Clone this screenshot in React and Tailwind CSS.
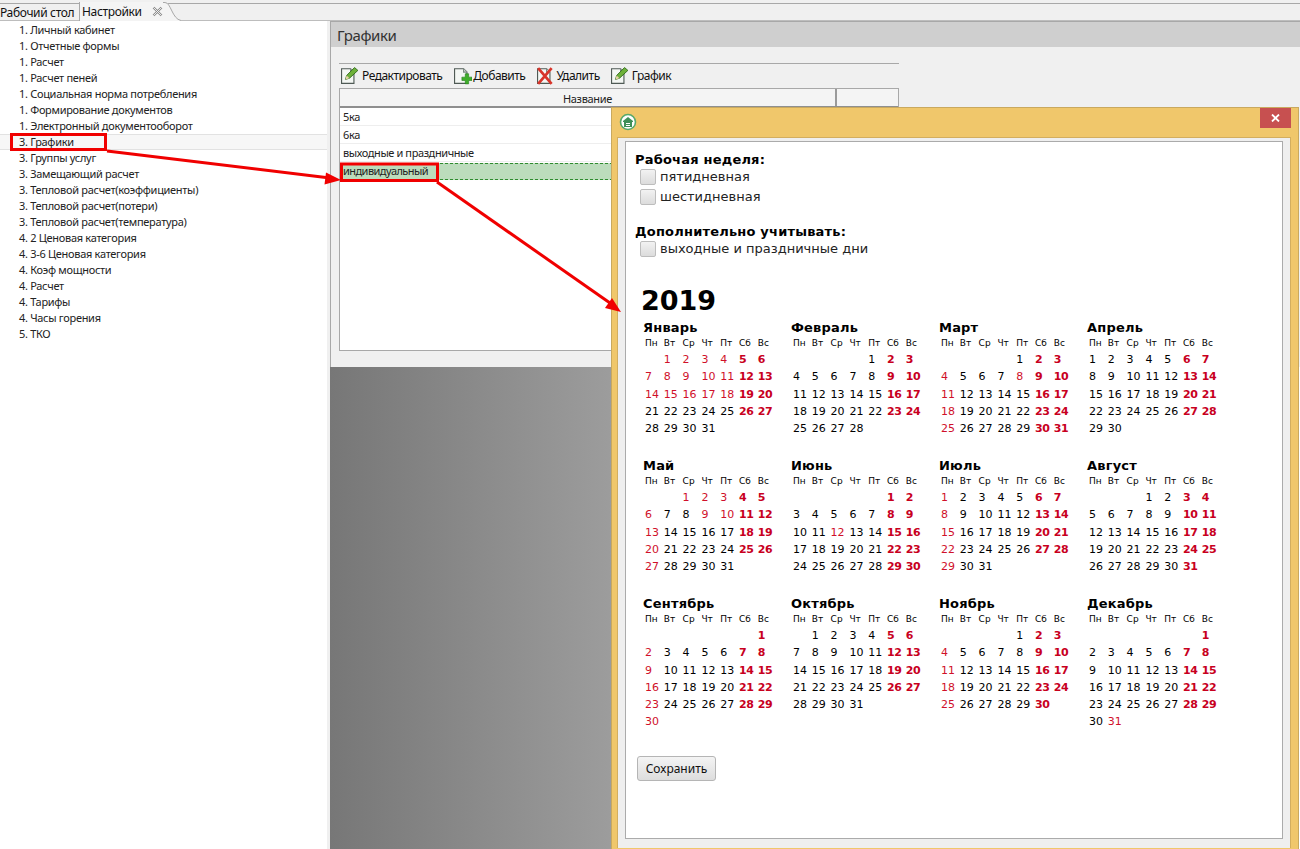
import React from 'react';

const menu = [
  '1. Личный кабинет','1. Отчетные формы','1. Расчет','1. Расчет пеней','1. Социальная норма потребления','1. Формирование документов','1. Электронный документооборот','3. Графики','3. Группы услуг','3. Замещающий расчет','3. Тепловой расчет(коэффициенты)','3. Тепловой расчет(потери)','3. Тепловой расчет(температура)','4. 2 Ценовая категория','4. 3-6 Ценовая категория','4. Коэф мощности','4. Расчет','4. Тарифы','4. Часы горения','5. ТКО',
];
const monthNames = ['Январь','Февраль','Март','Апрель','Май','Июнь','Июль','Август','Сентябрь','Октябрь','Ноябрь','Декабрь'];
const weekdays = ['Пн','Вт','Ср','Чт','Пт','Сб','Вс'];
const holidays = {
  0:[1,2,3,4,7,8,9,10,11,14,15,16,17,18],
  2:[4,8,11,18,25],
  4:[1,2,3,6,9,10,13,20,27],
  5:[12],
  6:[1,8,15,22,29],
  8:[2,9,16,23,30],
  10:[4,11,18,25],
  11:[31],
};

function Month({ index }) {
  const first = (new Date(2019, index, 1).getDay() + 6) % 7;
  const count = new Date(2019, index + 1, 0).getDate();
  const cells = [];
  for (let i = 0; i < first; i++) cells.push(<span key={'e' + i} />);
  for (let d = 1; d <= count; d++) {
    const wd = (first + d - 1) % 7;
    const weekend = wd >= 5;
    const hol = (holidays[index] || []).includes(d);
    cells.push(
      <span key={d} className={weekend ? 'font-bold text-[#c8001e] text-[11px] tracking-[-0.5px]' : hol ? 'text-[#d0102a]' : 'text-black'}>{d}</span>
    );
  }
  return (
    <div className="h-[138px]">
      <div className="font-bold text-[13px] leading-[15px] pl-px tracking-[0.2px] text-black">{monthNames[index]}</div>
      <div className="grid grid-cols-[repeat(7,18.8px)] pl-[3px] text-[9px] leading-[12px] mt-[2px] text-black">
        {weekdays.map((w) => <span key={w}>{w}</span>)}
      </div>
      <div className="grid grid-cols-[repeat(7,18.8px)] auto-rows-[17.25px] pl-[3px] mt-[2px] text-[11px] leading-[17px]">
        {cells}
      </div>
    </div>
  );
}

function DocPage({ children }) {
  return (
    <svg width="18" height="18" viewBox="2 2 16 16" className="shrink-0">
      <path d="M2.500 3.500h8l3 3v10h-11z" fill="#f4f7f4" stroke="#4f5a55" />
      <path d="M10.500 3.500v3h3" fill="#cfd8d0" stroke="#7c8a82" />
      {children}
    </svg>
  );
}
const Pencil = () => (
  <DocPage>
    <path d="M6 13l1-3.500L14 2.500l3 2.500-7.500 7z" fill="#6fb13a" stroke="#2f6b1c" strokeWidth="0.8" />
    <path d="M6 13l1-3.500 2.500 2.500z" fill="#e9d6a8" />
  </DocPage>
);
const Plus = () => (
  <DocPage>
    <path d="M9 11h3V8h3v3h3v3h-3v3h-3v-3H9z" fill="#3fae2a" stroke="#1f7a16" strokeWidth="0.5" />
  </DocPage>
);
const Del = () => (
  <DocPage>
    <path d="M3 3l12 14M15 3L3 17" stroke="#d8342a" strokeWidth="2.4" />
  </DocPage>
);

function Check({ label }) {
  return (
    <div className="flex items-center gap-1 h-[20px] pl-[5px]">
      <span className="w-[16px] h-[16px] rounded-[2px] border border-[#bdbdbd] bg-gradient-to-b from-[#f2f2f2] to-[#dcdcdc] shrink-0" />
      <span className="text-[13px] text-[#222]">{label}</span>
    </div>
  );
}

export default function App() {
  return (
    <div className="relative w-[1300px] h-[849px] overflow-hidden bg-white font-['Noto_Sans',sans-serif] text-[11px] tracking-[-0.3px] text-[#222]">
      {/* tabs */}
      <div className="h-[21px] bg-[#f0f0f0] border-t-2 border-t-[#f0f0f0] relative flex items-end">
        <div className="absolute left-0 right-0 top-[1px] h-px bg-[#a8a8a8]" />
        <div className="absolute left-0 right-0 bottom-0 h-px bg-[#bdbdbd]" />
        <span className="relative pl-0 w-[78px] h-[18px] text-[12px] leading-[20px] tracking-[-0.35px] text-[#111] whitespace-nowrap">Рабочий стол</span>
        <div className="relative flex items-center w-[73px] h-[19px] ml-[1px] bg-[#f4f4f4] border-l border-[#a8a8a8] pl-[2px] pt-px text-[12px] tracking-[-0.35px] text-[#111] whitespace-nowrap">
          Настройки
        </div>
        <div className="relative h-[19px] w-[11px] bg-[#f4f4f4] flex items-center">
          <svg width="11" height="11" viewBox="0 0 11 11">
            <path d="M1.500 1.500l8 8M9.500 1.500l-8 8" stroke="#8a8a8a" strokeWidth="2.4" />
            <path d="M1.500 1.500l8 8M9.500 1.500l-8 8" stroke="#f4f4f4" strokeWidth="0.9" />
          </svg>
        </div>
        <svg width="18" height="19" viewBox="0 0 18 19" className="relative shrink-0">
          <path d="M0 0h2C8 0 9 17 18 18.500V19H0z" fill="#f4f4f4" />
          <path d="M0 .5h2C8 .5 9 17 18 18.500" fill="none" stroke="#a8a8a8" />
        </svg>
      </div>

      <div className="flex h-[828px]">
        {/* sidebar */}
        <div className="w-[327px] shrink-0 pt-px">
          {menu.map((m) => (
            <div
              key={m}
              className={
                'h-[16px] pl-[19px] whitespace-pre ' +
                (m === '3. Графики' ? 'bg-[#f7f7f7] border-y border-[#e2e2e2] leading-[13px]' : 'leading-[16px]')
              }
            >
              {m}
            </div>
          ))}
        </div>
        <div className="w-[3px] shrink-0 bg-[#f0f0f0]" />
        {/* right */}
        <div className="flex-1 flex flex-col">
          <div className="h-[346px] bg-[#f0f0f0] border-l border-t border-[#a8a8a8] flex flex-col shrink-0">
            <div className="h-[25px] bg-[#cfcfcf] pl-[6px] text-[15px] leading-[27px] tracking-[-0.4px] text-[#333] shrink-0">Графики</div>
            <div className="pl-[8px] w-[568px]">
              <div className="mt-[16px] h-px bg-[#a8a8a8]" />
              <div className="h-[24px] flex items-center pl-[2px] text-[12px] tracking-[-0.5px] text-[#111]">
                <span className="flex items-center gap-[3px]"><Pencil />Редактировать</span>
                <span className="flex items-center gap-[1px] ml-[12px]"><Plus />Добавить</span>
                <span className="flex items-center gap-[1px] ml-[12px]"><Del />Удалить</span>
                <span className="flex items-center gap-[3px] ml-[11px]"><Pencil />График</span>
              </div>
              <div className="h-[263px] border border-[#a8a8a8] bg-white flex flex-col">
                <div className="h-[19px] shrink-0 flex bg-[#f4f4f4] border-b-2 border-[#8f8f8f] leading-[19px] text-[#222]">
                  <div className="w-[497px] border-r-2 border-[#9a9a9a] text-center">Название</div>
                </div>
                <div className="h-[18px] pl-[3px] leading-[18px] border-b border-[#eeeeee]">5ка</div>
                <div className="h-[18px] pl-[3px] leading-[18px] border-b border-[#eeeeee]">6ка</div>
                <div className="h-[18px] pl-[3px] leading-[18px] tracking-[-0.4px] border-b border-[#eeeeee]">выходные и праздничные</div>
                <div className="h-[17px] mt-px pl-[3px] leading-[14px] tracking-[-0.55px] bg-[#bcdcbc] border-y border-dashed border-[#2e8b2e]">индивидуальный</div>
              </div>
            </div>
          </div>
          <div className="flex-1 bg-gradient-to-r from-[#777777] to-[#ffffff]" />
        </div>
      </div>

      {/* modal window */}
      <div className="absolute left-[611px] top-[107px] w-[688px] h-[745px] bg-[#f0c76b] border border-[#c9a95f] flex flex-col font-['DejaVu_Sans',sans-serif] tracking-normal">
        <div className="h-[29px] shrink-0 flex justify-between pl-[7px] pr-[7px]">
          <svg width="18" height="18" viewBox="0 0 18 18" className="mt-[5px]">
            <circle cx="9" cy="9" r="7.500" fill="#ffffff" stroke="#58a96b" strokeWidth="1.6" />
            <path d="M9 4L4 8v1h1v5h8V9h1V8z" fill="#3e8f57" />
            <path d="M7 10h4v1H7zM7 12h4v1H7z" fill="#ffffff" />
          </svg>
          <div className="w-[31px] h-[20px] bg-[#c75050] flex items-center justify-center">
            <svg width="9" height="8" viewBox="0 0 9 8">
              <path d="M1 .5l7 7M8 .5l-7 7" stroke="#fff" strokeWidth="1.8" />
            </svg>
          </div>
        </div>
        <div className="ml-[5px] mr-[7px] h-[711px] bg-[#efefef] border-t border-l border-r border-[#d3ae5f] pt-[3px] pl-[7px] pr-[7px] shrink-0 flex flex-col">
          <div className="h-[698px] shrink-0 bg-white border border-[#ababab] pl-[9px] flex flex-col">
            <div className="mt-[10px] font-bold text-[13px] leading-[16px] tracking-[0.2px] text-black">Рабочая неделя:</div>
            <div className="mt-[-1px]"><Check label="пятидневная" /><Check label="шестидневная" /></div>
            <div className="mt-[17px] font-bold text-[13px] leading-[16px] tracking-[0.2px] text-black">Дополнительно учитывать:</div>
            <div className="mt-[-1px]"><Check label="выходные и праздничные дни" /></div>
            <div className="mt-[26px] pl-[6px] font-bold text-[27px] leading-[32px] text-black">2019</div>
            <div className="mt-[3px] ml-[7px] grid grid-cols-[repeat(4,148px)]">
              {monthNames.map((_, i) => <Month key={i} index={i} />)}
            </div>
            <button className="self-start ml-[2px] mt-[22px] w-[79px] h-[25px] rounded-[3px] border border-[#b5b5b5] bg-gradient-to-b from-[#f4f4f4] to-[#dddddd] font-['Noto_Sans',sans-serif] text-[12px] text-[#111]">Сохранить</button>
          </div>
        </div>
      </div>

      {/* annotations */}
      <svg width="1300" height="849" className="absolute left-0 top-0 pointer-events-none">
        <rect x="11.500" y="134.500" width="94" height="15" fill="none" stroke="#f00000" strokeWidth="3" />
        <rect x="341.500" y="164" width="96" height="16.500" fill="none" stroke="#f00000" strokeWidth="3" />
        <path d="M107 151L330 178" stroke="#f00000" strokeWidth="3" />
        <path d="M341 180l-15-7.500-1.500 12z" fill="#f00000" />
        <path d="M437 182L610 303" stroke="#f00000" strokeWidth="3" />
        <path d="M621 312l-16-4 7-10z" fill="#f00000" />
      </svg>
    </div>
  );
}
